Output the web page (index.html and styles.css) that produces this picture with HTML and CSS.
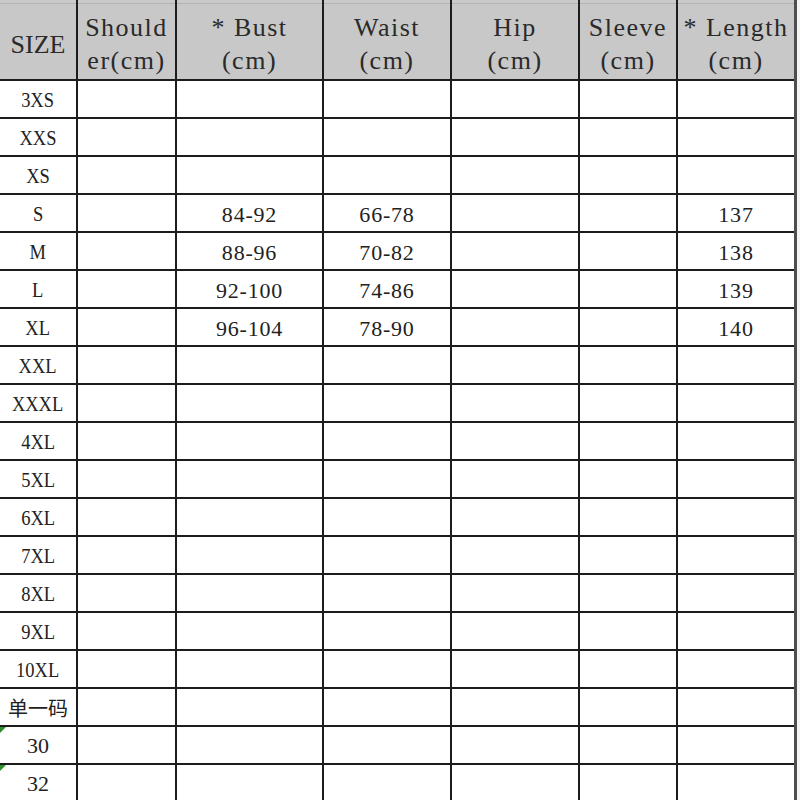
FILE: index.html
```html
<!DOCTYPE html>
<html lang="zh-CN">
<head>
<meta charset="utf-8">
<title>Size chart</title>
<link rel="stylesheet" href="styles.css">
</head>
<body>
<div class="sheet">
  <div class="grid">
    <div class="hd single">SIZE</div>
    <div class="hd">Should<br>er(cm)</div>
    <div class="hd">* Bust<br>(cm)</div>
    <div class="hd">Waist<br>(cm)</div>
    <div class="hd">Hip<br>(cm)</div>
    <div class="hd">Sleeve<br>(cm)</div>
    <div class="hd">* Length<br>(cm)</div>

    <div class="lbl"><span>3XS</span></div><div></div><div></div><div></div><div></div><div></div><div></div>
    <div class="lbl"><span>XXS</span></div><div></div><div></div><div></div><div></div><div></div><div></div>
    <div class="lbl"><span>XS</span></div><div></div><div></div><div></div><div></div><div></div><div></div>
    <div class="lbl"><span>S</span></div><div></div><div class="num">84-92</div><div class="num">66-78</div><div></div><div></div><div class="num">137</div>
    <div class="lbl"><span>M</span></div><div></div><div class="num">88-96</div><div class="num">70-82</div><div></div><div></div><div class="num">138</div>
    <div class="lbl"><span>L</span></div><div></div><div class="num">92-100</div><div class="num">74-86</div><div></div><div></div><div class="num">139</div>
    <div class="lbl"><span>XL</span></div><div></div><div class="num">96-104</div><div class="num">78-90</div><div></div><div></div><div class="num">140</div>
    <div class="lbl"><span>XXL</span></div><div></div><div></div><div></div><div></div><div></div><div></div>
    <div class="lbl"><span>XXXL</span></div><div></div><div></div><div></div><div></div><div></div><div></div>
    <div class="lbl"><span>4XL</span></div><div></div><div></div><div></div><div></div><div></div><div></div>
    <div class="lbl"><span>5XL</span></div><div></div><div></div><div></div><div></div><div></div><div></div>
    <div class="lbl"><span>6XL</span></div><div></div><div></div><div></div><div></div><div></div><div></div>
    <div class="lbl"><span>7XL</span></div><div></div><div></div><div></div><div></div><div></div><div></div>
    <div class="lbl"><span>8XL</span></div><div></div><div></div><div></div><div></div><div></div><div></div>
    <div class="lbl"><span>9XL</span></div><div></div><div></div><div></div><div></div><div></div><div></div>
    <div class="lbl"><span>10XL</span></div><div></div><div></div><div></div><div></div><div></div><div></div>
    <div class="lbl cjk">单一码</div><div></div><div></div><div></div><div></div><div></div><div></div>
    <div class="lbl flag">30</div><div></div><div></div><div></div><div></div><div></div><div></div>
    <div class="lbl flag">32</div><div></div><div></div><div></div><div></div><div></div><div></div>
  </div>
</div>
</body>
</html>
```

FILE: styles.css
```css
html, body {
  margin: 0;
  padding: 0;
  background: #f4f4f4;
  overflow: hidden;
}

.sheet {
  width: 800px;
  height: 800px;
  overflow: hidden;
  display: flex;
  align-items: flex-start;
}

.grid {
  display: grid;
  grid-template-columns: 76px 97px 145px 126px 126px 96px 116px;
  grid-template-rows: 79px;
  grid-auto-rows: 36px;
  column-gap: 2px;
  row-gap: 2px;
  background: #1c1c1c;
  border-right: 3px solid #4e4e4e;
  font-family: "Liberation Serif", "Noto Sans CJK SC", serif;
  color: #222;
}

.grid > div {
  background: #fff;
  display: flex;
  align-items: center;
  justify-content: center;
  text-align: center;
  position: relative;
}

.grid > .hd {
  background: linear-gradient(#cacaca 0 3px, #b4b4b4 3px 4px, #c8c8c8 4px);
  font-size: 26px;
  line-height: 33px;
  letter-spacing: 1.5px;
  padding-top: 9px;
  box-sizing: border-box;
  color: #2a2a2a;
}

.grid > .hd.single {
  letter-spacing: 0;
}

.lbl {
  font-size: 22px;
  padding-top: 1px;
  box-sizing: border-box;
}

.lbl span {
  display: inline-block;
  transform: scaleX(0.84);
}

.lbl.cjk {
  font-family: "Noto Sans CJK SC", sans-serif;
  font-size: 20px;
  padding-top: 0;
}

.num {
  font-size: 22px;
  letter-spacing: 0.8px;
  padding-top: 3px;
  box-sizing: border-box;
}

.flag::before {
  content: "";
  position: absolute;
  left: 0;
  top: 0;
  width: 0;
  height: 0;
  border-top: 6px solid #2f8f2f;
  border-right: 6px solid transparent;
}
```
